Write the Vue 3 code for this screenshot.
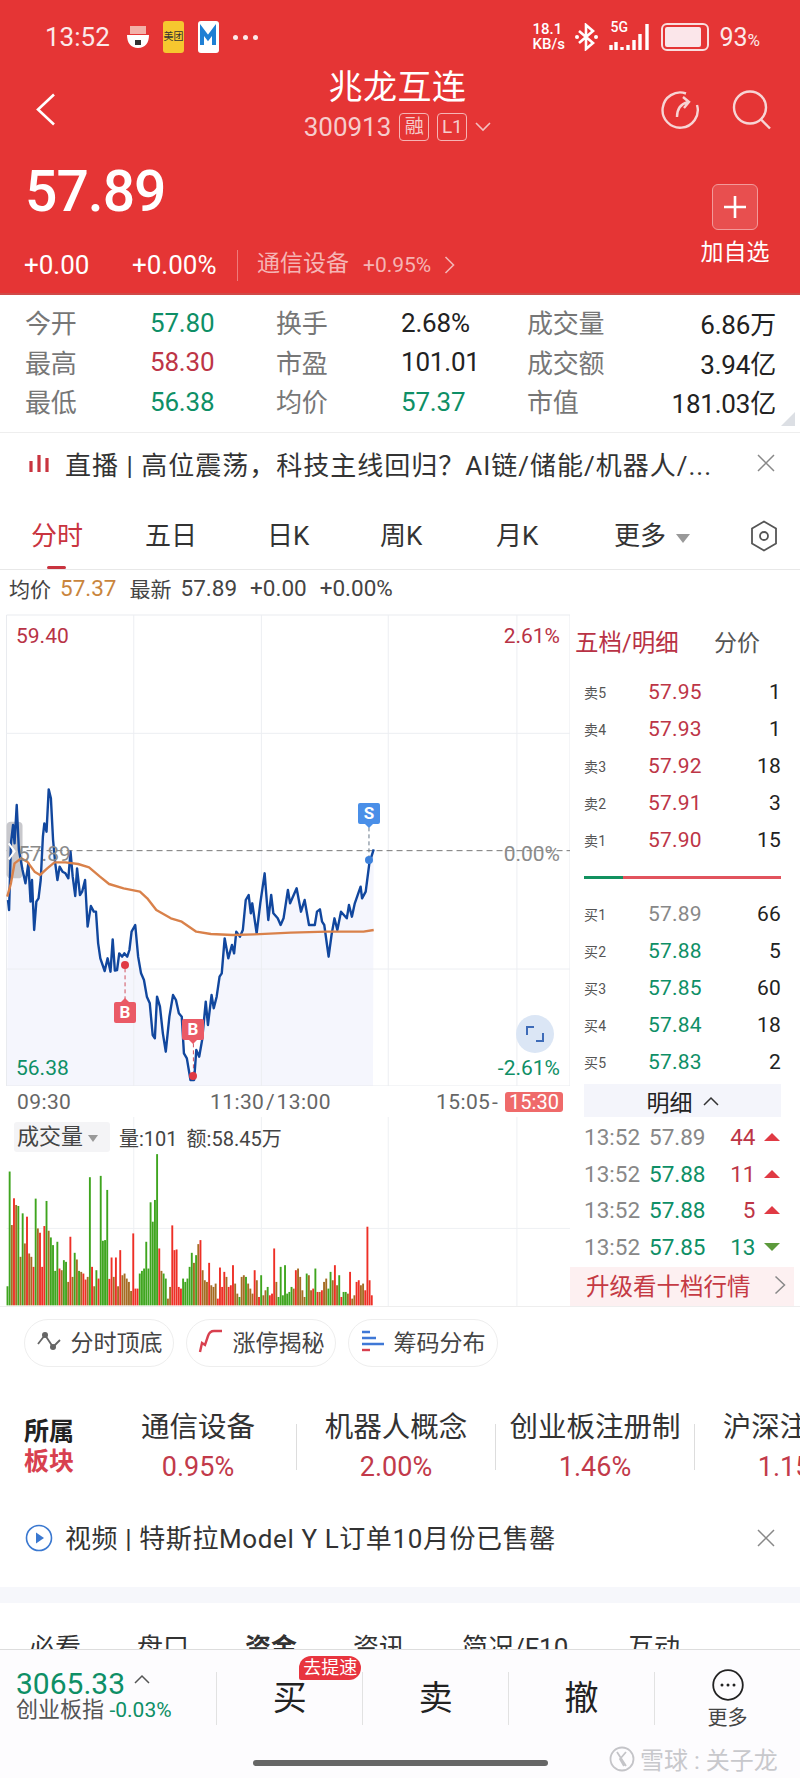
<template>
  <div class="page">
    <header class="top">
      <div class="status">
        <span class="clock">13:52</span>
        <svg class="app" width="22" height="24" viewBox="0 0 22 24">
          <rect x="3" y="1" width="16" height="8" fill="#f3b0a8" />
          <path d="M0 10h22c0 8-4 13-11 13S0 18 0 10z" fill="#fff" />
          <rect x="8" y="15" width="6" height="5" fill="#333" />
        </svg>
        <span class="meituan">美团</span>
        <svg class="app" width="21" height="32" viewBox="0 0 21 32">
          <rect width="21" height="32" rx="3" fill="#fff" />
          <path d="M4 24V9l6 8 6-8v15" fill="none" stroke="#1f7fd4" stroke-width="4" />
        </svg>
        <span class="dots">
          <i></i><i></i><i></i>
        </span>
        <span class="grow"></span>
        <span class="speed">18.1<br />KB/s</span>
        <svg class="bt" width="25" height="28" viewBox="0 0 25 28">
          <path d="M5 8l14 12-7 6V2l7 6L5 20" fill="none" stroke="#fff" stroke-width="2.6" />
          <circle cx="3" cy="14" r="2" fill="#fff" />
          <circle cx="22" cy="14" r="2" fill="#fff" />
        </svg>
        <span class="net">
          <span class="five">5G</span>
          <svg width="42" height="28" viewBox="0 0 42 28">
            <path d="M2 22v5M7 19v8M13 24v3M19 22v5M25 17v10M31 11v16M38 1v26" stroke="#fff" stroke-width="3.4" />
          </svg>
        </span>
        <span class="battery"><span class="level"></span></span>
        <span class="batt-num">93<small>%</small></span>
      </div>

      <div class="nav">
        <svg class="back" width="20" height="33" viewBox="0 0 20 33">
          <path d="M18 1.5L2 16.5l16 15" fill="none" stroke="#fff" stroke-width="2.6" />
        </svg>
        <div class="nav-mid">
          <div class="name">兆龙互连</div>
          <div class="sub">
            <span class="code">300913</span>
            <span class="tag">融</span>
            <span class="tag">L1</span>
            <svg width="16" height="10" viewBox="0 0 16 10">
              <path d="M1 1l7 7 7-7" fill="none" stroke="#f3c0c0" stroke-width="1.6" />
            </svg>
          </div>
        </div>
        <div class="nav-icons">
          <svg width="40" height="40" viewBox="0 0 40 40">
            <path d="M26 3.5A17.6 17.6 0 1 0 37 15" fill="none" stroke="#f7d5d5" stroke-width="2.4" />
            <path d="M17 27c0-8 3-13 11-15M23 7l6 5-5 6" fill="none" stroke="#f7d5d5" stroke-width="2.4" />
          </svg>
          <svg width="40" height="40" viewBox="0 0 40 40">
            <circle cx="18" cy="17.500" r="16" fill="none" stroke="#f7d5d5" stroke-width="2.4" />
            <path d="M29 29.500l9 9" stroke="#f7d5d5" stroke-width="2.4" />
          </svg>
        </div>
      </div>

      <div class="quote">
        <div>
          <div class="price">57.89</div>
          <div class="change">
            <span class="chg-a">+0.00</span>
            <span class="chg-b">+0.00%</span>
            <span class="chg-sector">通信设备</span>
            <span class="chg-pct">+0.95%</span>
            <svg width="11" height="18" viewBox="0 0 11 18">
              <path d="M1.500 1l8 8-8 8" fill="none" stroke="#f3b5b5" stroke-width="1.600" />
            </svg>
          </div>
        </div>
        <div class="add">
          <div class="plus">
            <svg width="24" height="24" viewBox="0 0 24 24">
              <path d="M12 1v22M1 12h22" stroke="#fff" stroke-width="2.600" />
            </svg>
          </div>
          <div class="add-text">加自选</div>
        </div>
      </div>
    </header>

    <section class="stats">
      <template v-for="row in stats" :key="row[0]">
        <span class="st-label">{{ row[0] }}</span>
        <span :class="row[2]">{{ row[1] }}</span>
        <span class="st-label">{{ row[3] }}</span>
        <span :class="row[5]">{{ row[4] }}</span>
        <span class="st-label">{{ row[6] }}</span>
        <span class="st-last">{{ row[7] }}</span>
      </template>
      <span class="corner"></span>
    </section>

    <div class="ticker">
      <svg width="20" height="18" viewBox="0 0 20 18">
        <path d="M2 7v11M10 1v17M18 4v14" stroke="#c9343f" stroke-width="3.200" />
      </svg>
      <span class="ticker-text live">直播 | 高位震荡，科技主线回归？AI链/储能/机器人/...</span>
      <svg class="close" width="18" height="18" viewBox="0 0 18 18">
        <path d="M1 1l16 16M17 1L1 17" stroke="#888" stroke-width="1.500" />
      </svg>
    </div>

    <nav class="tabs">
      <span class="tab active">分时</span>
      <span class="tab">五日</span>
      <span class="tab">日K</span>
      <span class="tab">周K</span>
      <span class="tab">月K</span>
      <span class="tab">更多<i class="caret"></i></span>
      <svg width="28" height="32" viewBox="0 0 28 32">
        <path d="M14 1.500l12 7v15l-12 7-12-7v-15z" fill="none" stroke="#555" stroke-width="1.800" />
        <circle cx="14" cy="16" r="4" fill="none" stroke="#555" stroke-width="1.800" />
      </svg>
    </nav>

    <div class="info">
      <span class="cjk">均价</span><span class="orange">57.37</span>
      <span class="gap cjk">最新</span><span>57.89</span>
      <span class="gap">+0.00</span><span class="gap">+0.00%</span>
    </div>

    <div class="market">
      <div class="left">
        <div class="chart">
          <svg class="lines" width="570" height="476" viewBox="0 0 1568 1428" preserveAspectRatio="none">
            <path :d="areaPath" fill="#f5f6fd" />
            <rect x="18" y="15" width="1550" height="1413" fill="none" stroke="#e9ebef" stroke-width="1" vector-effect="non-scaling-stroke" />
            <path d="M18 370H1568M18 1077H1568M368 15V1428M719 15V1428M1068 15V1428M1422 15V1428" stroke="#eceef2" fill="none" vector-effect="non-scaling-stroke" />
            <path d="M18 722H1568" stroke="#777" stroke-dasharray="6 4" fill="none" vector-effect="non-scaling-stroke" />
            <rect x="18" y="635" width="44" height="170" rx="12" fill="#c8c8cc" />
            <path d="M344 1075V1170M532 1300V1395" stroke="#d0505e" stroke-dasharray="4 3" fill="none" vector-effect="non-scaling-stroke" />
            <path d="M1015 652V745" stroke="#667788" stroke-dasharray="4 3" fill="none" vector-effect="non-scaling-stroke" />
            <path :d="bluePath" fill="none" stroke="#11479e" stroke-width="2.400" stroke-linejoin="round" vector-effect="non-scaling-stroke" />
            <path :d="orangePath" fill="none" stroke="#d9814a" stroke-width="2.400" stroke-linejoin="round" vector-effect="non-scaling-stroke" />
            <path d="M24 700l16 24-16 24" fill="none" stroke="#fff" stroke-width="2" vector-effect="non-scaling-stroke" />
          </svg>
          <span class="dot red" style="left: 121px; top: 351px"></span>
          <span class="dot red" style="left: 189px; top: 462px"></span>
          <span class="dot blue" style="left: 365px; top: 246px"></span>
          <span class="mark mark-b up" style="left: 114px; top: 392px">B</span>
          <span class="mark mark-b down" style="left: 182px; top: 409px">B</span>
          <span class="mark mark-s down" style="left: 358px; top: 193px">S</span>
          <span class="ax ax-tl">59.40</span>
          <span class="ax ax-tr">2.61%</span>
          <span class="ax ax-ml">57.89</span>
          <span class="ax ax-mr">0.00%</span>
          <span class="ax ax-bl">56.38</span>
          <span class="ax ax-br">-2.61%</span>
          <span class="expand">
            <svg width="20" height="20" viewBox="0 0 20 20">
              <path d="M9 3H2v8M11 17h7V9" fill="none" stroke="#3d6bb8" stroke-width="2" />
            </svg>
          </span>
        </div>
        <div class="times">
          <span>09:30</span>
          <span>11:30 / 13:00</span>
          <span>15:05 -</span>
          <span class="t-tag">15:30</span>
        </div>
        <div class="volume">
          <svg width="570" height="189" viewBox="0 52 1568 565" preserveAspectRatio="none">
            <path d="M18 385H1568M368 52V617M719 52V617M1068 52V617M1422 52V617" stroke="#eef0f3" fill="none" vector-effect="non-scaling-stroke" />
            <rect
              v-for="(bar, i) in volumeBars"
              :key="i"
              :x="18 + i * barStep"
              :y="bar.top"
              width="5.200"
              :height="615 - bar.top"
              :fill="bar.color"
            />
          </svg>
          <div class="vol-head">
            <span class="vol-chip">成交量<i class="caret small"></i></span>
            <span>量:101</span>
            <span>额:58.45万</span>
          </div>
        </div>
      </div>

      <aside class="panel">
        <div class="panel-head">
          <span class="ph-on">五档/明细</span>
          <span class="ph-off">分价</span>
        </div>
        <div v-for="r in sells" :key="r[0]" class="level-row">
          <span class="lv">{{ r[0] }}</span>
          <span class="up-c">{{ r[1] }}</span>
          <span class="qty">{{ r[2] }}</span>
        </div>
        <div class="depth"><span class="depth-buy"></span><span class="depth-sell"></span></div>
        <div v-for="r in buys" :key="r[0]" class="level-row">
          <span class="lv">{{ r[0] }}</span>
          <span :class="r[3]">{{ r[1] }}</span>
          <span class="qty">{{ r[2] }}</span>
        </div>
        <div class="detail-btn">
          明细
          <svg width="16" height="10" viewBox="0 0 16 10">
            <path d="M1 9l7-7 7 7" fill="none" stroke="#333" stroke-width="1.500" />
          </svg>
        </div>
        <div v-for="(t, i) in trades" :key="i" class="trade-row">
          <span class="tr-time">13:52</span>
          <span :class="t[1]">{{ t[0] }}</span>
          <span class="tr-qty" :class="t[3]">{{ t[2] }}</span>
          <i :class="t[3] === 'up-c' ? 'tri-up' : 'tri-down'"></i>
        </div>
        <div class="upgrade">
          <span>升级看十档行情</span>
          <svg width="12" height="20" viewBox="0 0 12 20">
            <path d="M1.500 1.500l9 8.500-9 8.500" fill="none" stroke="#888" stroke-width="1.500" />
          </svg>
        </div>
      </aside>
    </div>

    <div class="chips">
      <span class="chip">
        <svg width="26" height="20" viewBox="0 0 26 20">
          <path d="M2 13l7-9 8 12 7-7" fill="none" stroke="#666" stroke-width="1.800" />
          <circle cx="9" cy="4" r="3" fill="#666" />
          <circle cx="17" cy="16" r="3" fill="#666" />
        </svg>
        分时顶底
      </span>
      <span class="chip">
        <svg width="26" height="24" viewBox="0 0 26 24">
          <path d="M2 23l2-9 3 2 3-9c1-3 3-5 6-5h8" fill="none" stroke="#d8404f" stroke-width="2.400" />
        </svg>
        涨停揭秘
      </span>
      <span class="chip">
        <svg width="24" height="22" viewBox="0 0 24 22">
          <path d="M1 2h8M1 8h14M1 14h22" stroke="#3f78d6" stroke-width="2.400" />
          <path d="M1 20h8" stroke="#d8404f" stroke-width="2.400" />
        </svg>
        筹码分布
      </span>
    </div>

    <div class="sectors">
      <div class="sec-title"><span>所属</span><span class="sec-red">板块</span></div>
      <template v-for="s in sectors" :key="s.name">
        <div class="sec-item" :style="{ flexBasis: s.w + 'px' }">
          <span class="sec-name">{{ s.name }}</span>
          <span class="sec-pct">{{ s.pct }}</span>
        </div>
        <i class="sec-sep"></i>
      </template>
    </div>

    <div class="video">
      <svg width="28" height="28" viewBox="0 0 28 28">
        <circle cx="14" cy="14" r="12.500" fill="none" stroke="#3a78d0" stroke-width="1.600" />
        <path d="M11 8.500l8 5.500-8 5.500z" fill="#3a78d0" />
      </svg>
      <span class="ticker-text vid">视频 | 特斯拉Model Y L订单10月份已售罄</span>
      <svg class="close" width="18" height="18" viewBox="0 0 18 18">
        <path d="M1 1l16 16M17 1L1 17" stroke="#888" stroke-width="1.500" />
      </svg>
    </div>

    <div class="band"></div>

    <div class="lower-tabs">
      <span style="width: 108px">必看</span>
      <span style="width: 108px">盘口</span>
      <span class="bold" style="width: 108px">资金</span>
      <span style="width: 109px">资讯</span>
      <span style="width: 166px">简况/F10</span>
      <span>互动</span>
    </div>

    <footer class="bottom">
      <div class="bar-row">
        <div class="index">
          <div class="idx-val">3065.33
            <svg width="16" height="10" viewBox="0 0 16 10">
              <path d="M1 9l7-7 7 7" fill="none" stroke="#555" stroke-width="1.500" />
            </svg>
          </div>
          <div class="idx-name">创业板指 <span>-0.03%</span></div>
        </div>
        <div class="act"><b>买</b><span class="speedup">去提速</span></div>
        <div class="act"><b>卖</b></div>
        <div class="act"><b>撤</b></div>
        <div class="act more">
          <svg width="32" height="32" viewBox="0 0 32 32">
            <circle cx="16" cy="16" r="14.800" fill="none" stroke="#222" stroke-width="1.800" />
            <circle cx="10" cy="16" r="1.500" fill="#222" />
            <circle cx="16" cy="16" r="1.500" fill="#222" />
            <circle cx="22" cy="16" r="1.500" fill="#222" />
          </svg>
          <span>更多</span>
        </div>
      </div>
      <div class="home"></div>
      <div class="watermark">
        <svg width="26" height="26" viewBox="0 0 26 26">
          <circle cx="13" cy="13" r="11.500" fill="none" stroke="#c4c4c8" stroke-width="1.800" />
          <path d="M8 6l9 14M17 6l-6 7 4 7" fill="none" stroke="#c4c4c8" stroke-width="1.800" />
        </svg>
        <span>雪球 : 关子龙</span>
      </div>
    </footer>
  </div>
</template>

<script setup>
const stats = [
  ['今开', '57.80', 'st-val down-c', '换手', '2.68%', 'st-val', '成交量', '6.86万'],
  ['最高', '58.30', 'st-val up-c', '市盈', '101.01', 'st-val', '成交额', '3.94亿'],
  ['最低', '56.38', 'st-val down-c', '均价', '57.37', 'st-val down-c', '市值', '181.03亿'],
]

const sells = [
  ['卖5', '57.95', 1],
  ['卖4', '57.93', 1],
  ['卖3', '57.92', 18],
  ['卖2', '57.91', 3],
  ['卖1', '57.90', 15],
]

const buys = [
  ['买1', '57.89', 66, 'flat-c'],
  ['买2', '57.88', 5, 'down-c'],
  ['买3', '57.85', 60, 'down-c'],
  ['买4', '57.84', 18, 'down-c'],
  ['买5', '57.83', 2, 'down-c'],
]

const trades = [
  ['57.89', 'flat-c', 44, 'up-c'],
  ['57.88', 'down-c', 11, 'up-c'],
  ['57.88', 'down-c', 5, 'up-c'],
  ['57.85', 'down-c', 13, 'down-c'],
]

const sectors = [
  { name: '通信设备', pct: '0.95%', w: 196 },
  { name: '机器人概念', pct: '2.00%', w: 198 },
  { name: '创业板注册制', pct: '1.46%', w: 198 },
  { name: '沪深注册制', pct: '1.15%', w: 198 },
]

// traced by hand from the intraday chart, x/y in the svg viewBox
const blue = '22,870 25,900 30,700 36,645 40,700 46,585 52,720 62,780 70,820 78,760 84,875 88,810 94,960 100,875 106,865 112,810 118,680 122,640 128,665 134,538 140,565 146,690 152,760 158,810 164,770 172,785 180,790 188,805 194,725 200,800 207,858 212,775 220,855 226,845 234,810 241,950 250,888 258,905 264,905 270,1000 276,1045 288,1083 296,1045 304,1085 310,988 316,1082 322,1080 328,1030 336,1040 342,1030 350,1040 356,1020 362,965 372,945 380,1040 388,1090 396,1110 404,1160 412,1180 420,1275 426,1285 432,1160 440,1190 448,1270 456,1325 466,1220 476,1155 484,1170 492,1210 500,1220 506,1330 514,1345 524,1410 534,1410 540,1320 548,1340 556,1290 566,1175 572,1245 582,1155 588,1195 596,1160 604,1100 610,1090 618,985 628,1045 638,1005 644,1030 650,965 660,980 668,960 676,870 684,855 690,910 694,880 706,970 716,880 728,790 738,930 746,855 752,910 764,925 772,945 780,925 792,840 798,880 816,835 828,905 838,870 850,945 866,945 872,905 880,898 886,935 892,945 904,1040 912,975 920,925 928,960 938,905 954,925 960,885 968,920 976,880 992,830 996,865 1006,845 1016,760 1028,718'
const orange = '20,860 30,820 40,760 58,745 75,755 95,785 110,795 130,775 150,757 180,757 215,762 245,772 275,800 300,822 340,835 385,845 405,865 430,900 470,925 500,935 540,965 580,972 640,975 700,973 800,968 900,965 1000,965 1028,960'

const bluePath = 'M' + blue.replaceAll(' ', 'L')
const orangePath = 'M' + orange.replaceAll(' ', 'L')
const areaPath = 'M18,1428L' + blue.replaceAll(' ', 'L') + 'L1026,1428Z'

const barColors = { g: '#3fa51f', r: '#ee2f26', b: '#a56c24' }
const volumeBars = 'g558 g215 b375 r295 b315 g318 b470 g340 b430 r350 b460 b470 r500 g296 b385 r398 r500 r378 g303 b392 g412 g435 g512 g425 r505 b510 g480 g485 b545 r410 b530 g458 b478 g512 b515 r520 r538 b530 g232 r500 b558 g510 r535 g228 g422 g420 g270 r536 r472 b530 r472 b558 r450 b525 b520 b535 b545 b572 r400 r565 r565 g520 g512 g505 g425 g505 g307 g365 g300 g163 r445 b512 g520 g535 b595 b560 r376 r450 r448 r560 r565 g535 g545 g535 g500 g458 b488 g465 b432 r420 b510 b540 b545 r488 b555 b560 b550 r595 r502 r560 r515 b530 r560 r555 r495 b550 b580 g590 b530 b525 g530 b550 b565 b580 r510 b540 r590 g525 b585 b570 g560 r585 r580 r445 b545 g590 g500 g585 g495 g580 g575 g560 b565 r510 b505 b530 b570 b590 g520 b525 b570 r565 g505 r575 b575 r570 b545 b535 g565 g515 b540 r495 b555 g525 r590 g575 g575 b580 r515 b595 b585 r545 r540 b555 b550 r570 r380 r540 r585'
  .split(' ')
  .map(item => ({ color: barColors[item[0]], top: Number(item.slice(1)) }))
const barStep = 1008 / volumeBars.length
</script>

<style scoped>
.page {
  width: 800px;
  height: 1778px;
  overflow: hidden;
  background: #fff;
  font-family: Roboto, 'Noto Sans CJK SC', sans-serif;
  color: #222;
  position: relative;
}

.top {
  height: 295px;
  background: #e53535;
  color: #fff;
  box-sizing: border-box;
  border-bottom: 2px solid #d04a48;
}

.status {
  height: 74px;
  display: flex;
  align-items: center;
  padding: 0 40px 0 45px;
}
.clock {
  font-size: 26px;
  width: 82px;
  color: #fbe9e9;
}
.app {
  flex: none;
}
.meituan {
  width: 21px;
  height: 32px;
  margin: 0 14px;
  border-radius: 3px;
  background: #f6c72f;
  color: #333;
  font-size: 10px;
  line-height: 32px;
  text-align: center;
  overflow: hidden;
  white-space: nowrap;
}
.dots {
  display: flex;
  gap: 5px;
  margin-left: 14px;
}
.dots i {
  width: 5px;
  height: 5px;
  border-radius: 50%;
  background: #fbe9e9;
}
.grow {
  flex: 1;
}
.speed {
  font-size: 15px;
  line-height: 15px;
  font-weight: 500;
  width: 42px;
}
.bt {
  margin-right: 10px;
}
.net {
  position: relative;
  width: 44px;
}
.net svg {
  display: block;
}
.five {
  position: absolute;
  left: 1px;
  top: -4px;
  font-size: 14px;
  font-weight: 500;
}
.battery {
  width: 40px;
  height: 20px;
  margin-left: 8px;
  border: 2px solid #f9dede;
  border-radius: 6px;
  padding: 2px;
  display: block;
}
.level {
  display: block;
  width: 90%;
  height: 100%;
  border-radius: 2px;
  background: #fbe6ea;
}
.batt-num {
  margin-left: 10px;
  font-size: 25px;
  color: #fbe9e9;
}
.batt-num small {
  font-size: 17px;
}

.nav {
  height: 72px;
  display: grid;
  grid-template-columns: 200px 1fr 200px;
  padding-left: 36px;
  padding-right: 28px;
}
.back {
  margin-top: 19px;
}
.nav-mid {
  display: flex;
  flex-direction: column;
  align-items: center;
  margin-left: -13px;
}
.name {
  font-size: 34px;
  line-height: 26px;
  letter-spacing: 0.5px;
}
.sub {
  display: flex;
  align-items: center;
  gap: 8px;
  margin-top: 13px;
  height: 28px;
  color: #f6cccc;
}
.code {
  font-size: 26px;
}
.tag {
  width: 28px;
  height: 26px;
  border: 1px solid #f6b4b4;
  border-radius: 4px;
  font-size: 19px;
  line-height: 25px;
  text-align: center;
}
.nav-icons {
  display: flex;
  justify-content: flex-end;
  gap: 32px;
  margin-top: 16px;
}

.quote {
  display: flex;
  justify-content: space-between;
  padding: 0 30px 0 24px;
}
.price {
  margin-top: 16px;
  margin-left: 1px;
  font-size: 57px;
  line-height: 60px;
  letter-spacing: -1px;
  font-weight: 500;
}
.change {
  margin-top: 28px;
  height: 30px;
  display: flex;
  align-items: center;
}
.chg-a {
  width: 108px;
  font-size: 26px;
}
.chg-b {
  width: 105px;
  font-size: 26px;
}
.chg-sector {
  border-left: 1px solid #ef7a7a;
  padding-left: 19px;
  font-size: 23px;
  line-height: 28px;
  padding-bottom: 3px;
  color: #f5b4b4;
  margin-right: 14px;
}
.chg-pct {
  font-size: 21px;
  color: #f5b4b4;
  margin-right: 13px;
}
.add {
  width: 70px;
  display: flex;
  flex-direction: column;
  align-items: center;
}
.plus {
  margin-top: 38px;
  width: 46px;
  height: 46px;
  box-sizing: border-box;
  border: 1px solid #f29a9a;
  border-radius: 6px;
  background: #e84f4f;
  display: flex;
  align-items: center;
  justify-content: center;
}
.add-text {
  margin-top: 8px;
  font-size: 23px;
  line-height: 30px;
}

.stats {
  position: relative;
  height: 138px;
  box-sizing: border-box;
  padding: 8px 24px 0 25px;
  border-bottom: 1px solid #eee;
  display: grid;
  grid-template-columns: 125px 126px 125px 126px 120px 1fr;
  grid-auto-rows: 39.500px;
  align-items: center;
  font-size: 26px;
  letter-spacing: -0.2px;
}
.st-label {
  color: #777;
  padding-bottom: 2px;
}
.st-last {
  text-align: right;
  color: #222;
}
.corner {
  position: absolute;
  right: 5px;
  bottom: 6px;
  width: 0;
  height: 0;
  border-left: 14px solid transparent;
  border-bottom: 14px solid #dcdfe4;
}
.down-c {
  color: #0e8f66;
}
.up-c {
  color: #bd3546;
}
.flat-c {
  color: #888;
}

.ticker {
  height: 60px;
  display: flex;
  align-items: center;
  padding: 0 25px 0 29px;
  gap: 16px;
}
.ticker-text {
  flex: 1;
  font-size: 26px;
  color: #333;
  white-space: nowrap;
}
.ticker-text.live {
  letter-spacing: 1px;
}
.ticker-text.vid {
  letter-spacing: 0.6px;
  padding-bottom: 4px;
}
.close {
  flex: none;
}

.tabs {
  height: 77px;
  box-sizing: border-box;
  border-bottom: 1px solid #e8e8e8;
  padding: 14px 0 0 31px;
  display: grid;
  grid-template-columns: 114px 122px 113px 116px 118px 136px 30px;
  align-items: start;
  font-size: 26px;
  line-height: 58px;
  color: #333;
}
.tabs svg {
  margin-top: 13px;
}
.tab {
  position: relative;
  height: 62px;
}
.tab.active {
  color: #c9343f;
}
.tab.active::after {
  content: '';
  position: absolute;
  left: 16px;
  bottom: 0;
  width: 19px;
  height: 3px;
  border-radius: 2px;
  background: #c9343f;
}
.caret {
  display: inline-block;
  width: 0;
  height: 0;
  margin-left: 10px;
  vertical-align: middle;
  border-left: 7px solid transparent;
  border-right: 7px solid transparent;
  border-top: 9px solid #999;
}
.caret.small {
  margin-left: 5px;
  border-left-width: 5px;
  border-right-width: 5px;
  border-top-width: 7px;
}

.info {
  height: 40px;
  box-sizing: border-box;
  padding: 0 0 4px 9px;
  display: flex;
  align-items: center;
  gap: 9px;
  font-size: 22.500px;
  color: #444;
}
.info .cjk {
  font-size: 21px;
}
.info .gap {
  margin-left: 4px;
}
.orange {
  color: #c9853d;
}

.market {
  display: flex;
  height: 696px;
  border-bottom: 1px solid #eee;
}
.left {
  width: 570px;
  flex: none;
}
.chart {
  position: relative;
  height: 476px;
}
.lines {
  display: block;
}
.dot {
  position: absolute;
  width: 8px;
  height: 8px;
  border-radius: 50%;
}
.dot.red {
  background: #e03a44;
}
.dot.blue {
  background: #3d82dc;
}
.mark {
  position: absolute;
  width: 22px;
  height: 21px;
  border-radius: 2px;
  color: #fff;
  font-size: 17px;
  font-weight: 700;
  line-height: 21px;
  text-align: center;
}
.mark-b {
  background: #ea5a66;
}
.mark-s {
  background: #4a8fe8;
}
.mark.up::before,
.mark.down::after {
  content: '';
  position: absolute;
  left: 7px;
  border-left: 4px solid transparent;
  border-right: 4px solid transparent;
}
.mark.up::before {
  top: -4px;
  border-bottom: 4px solid #ea5a66;
}
.mark-b.down::after {
  bottom: -4px;
  border-top: 4px solid #ea5a66;
}
.mark-s.down::after {
  bottom: -4px;
  border-top: 4px solid #4a8fe8;
}
.ax {
  position: absolute;
  font-size: 21px;
  line-height: 26px;
}
.ax-tl {
  left: 16px;
  top: 13px;
  color: #b83245;
}
.ax-tr {
  right: 10px;
  top: 13px;
  color: #b83245;
}
.ax-ml {
  left: 18px;
  top: 231px;
  color: #8a8a8a;
}
.ax-mr {
  right: 10px;
  top: 231px;
  color: #8a8a8a;
}
.ax-bl {
  left: 16px;
  top: 445px;
  color: #0e8f66;
}
.ax-br {
  right: 10px;
  top: 445px;
  color: #0e8f66;
}
.expand {
  position: absolute;
  left: 516px;
  top: 405px;
  width: 38px;
  height: 38px;
  border-radius: 50%;
  background: #dbe6f5;
  display: flex;
  align-items: center;
  justify-content: center;
}

.times {
  height: 31px;
  display: grid;
  grid-template-columns: 193px 226px 69px 58px;
  align-items: center;
  padding-left: 17px;
  font-size: 21px;
  letter-spacing: 0.4px;
  word-spacing: -4px;
  white-space: nowrap;
  color: #666;
}
.t-tag {
  height: 20px;
  line-height: 20px;
  border-radius: 3px;
  background: #ef6a6a;
  color: #fff;
  text-align: center;
  font-size: 20px;
  letter-spacing: 0;
}

.volume {
  position: relative;
  height: 189px;
}
.volume svg {
  display: block;
}
.vol-head {
  position: absolute;
  left: 14px;
  top: 5px;
  display: flex;
  align-items: center;
  gap: 9px;
  font-size: 20px;
  color: #444;
}
.vol-chip {
  width: 96px;
  height: 30px;
  box-sizing: border-box;
  padding-left: 3px;
  background: #f4f4f6;
  border-radius: 3px;
  font-size: 22px;
  line-height: 30px;
  white-space: nowrap;
}

.panel {
  flex: 1;
  padding: 0 19px 0 14px;
}
.panel-head {
  height: 63.500px;
  display: flex;
  align-items: center;
  justify-content: space-between;
  padding: 0 21px 2px 0;
  margin-left: -9px;
  font-size: 23.500px;
  box-sizing: border-box;
}
.ph-on {
  color: #b83245;
}
.ph-off {
  color: #555;
  font-size: 23px;
}
.level-row {
  height: 37px;
  display: grid;
  grid-template-columns: 64px 1fr auto;
  align-items: center;
  font-size: 21px;
  letter-spacing: 0.2px;
}
.lv {
  font-size: 14px;
  color: #555;
}
.qty {
  color: #222;
}
.depth {
  height: 37px;
  display: flex;
  align-items: center;
}
.depth-buy {
  width: 39px;
  height: 3px;
  background: #12915f;
}
.depth-sell {
  flex: 1;
  height: 3px;
  background: #e2535d;
}
.detail-btn {
  margin-top: 3.500px;
  margin-bottom: 2px;
  height: 33px;
  background: #f4f5fb;
  display: flex;
  align-items: center;
  justify-content: center;
  gap: 10px;
  font-size: 23px;
  color: #222;
}
.trade-row {
  height: 36.500px;
  display: flex;
  align-items: center;
  font-size: 22.500px;
}
.tr-time {
  width: 65px;
  color: #888;
}
.tr-qty {
  width: 50px;
  text-align: right;
}
.tri-up,
.tri-down {
  margin-left: 8px;
  width: 0;
  height: 0;
  border-left: 8px solid transparent;
  border-right: 8px solid transparent;
}
.tri-up {
  border-bottom: 8px solid #e03a44;
}
.tri-down {
  border-top: 8px solid #5c9a3c;
}
.upgrade {
  margin: 2px -13px 0 -14px;
  height: 39px;
  box-sizing: border-box;
  padding: 0 8px 4px 16px;
  display: flex;
  align-items: center;
  justify-content: space-between;
  background: #fdf0f1;
  color: #c53a44;
  font-size: 23.500px;
}

.chips {
  display: flex;
  gap: 12px;
  padding: 12px 0 0 24px;
}
.chip {
  width: 150px;
  height: 48px;
  box-sizing: border-box;
  padding-bottom: 5px;
  border: 1px solid #eeeeee;
  border-radius: 24px;
  display: flex;
  align-items: center;
  justify-content: center;
  gap: 9px;
  font-size: 23px;
  color: #444;
}

.sectors {
  margin-top: 41px;
  height: 78px;
  display: flex;
  align-items: center;
  overflow: hidden;
}
.sec-title {
  width: 100px;
  flex: none;
  box-sizing: border-box;
  padding-left: 24px;
  display: flex;
  flex-direction: column;
  font-size: 25px;
  line-height: 30px;
  font-weight: 700;
}
.sec-red {
  color: #d8404f;
}
.sec-item {
  flex: none;
  display: flex;
  flex-direction: column;
  align-items: center;
}
.sec-name {
  font-size: 28.500px;
  line-height: 40px;
  color: #333;
  white-space: nowrap;
}
.sec-pct {
  font-size: 27px;
  line-height: 38px;
  color: #c23a4a;
}
.sec-sep {
  flex: none;
  width: 1px;
  height: 46px;
  background: #ddd;
}

.video {
  margin-top: 27px;
  height: 50px;
  display: flex;
  align-items: center;
  gap: 12px;
  padding: 0 25px 0 25px;
}

.band {
  margin-top: 24px;
  height: 16px;
  background: #f6f7fb;
}

.lower-tabs {
  height: 46px;
  overflow: hidden;
  box-sizing: border-box;
  padding: 27px 0 0 29px;
  display: flex;
  font-size: 26px;
  line-height: 36px;
  color: #333;
}
.bold {
  font-weight: 700;
}

.bottom {
  height: 129px;
  box-sizing: border-box;
  border-top: 1px solid #ddd;
  background: #fdfcfe;
  padding-top: 22px;
  position: relative;
}
.bar-row {
  display: flex;
  height: 53px;
}
.index {
  width: 217px;
  box-sizing: border-box;
  padding-left: 16px;
}
.idx-val {
  font-size: 30px;
  line-height: 24px;
  color: #0e8f66;
  display: flex;
  align-items: flex-start;
  gap: 9px;
}
.idx-val svg {
  margin-top: 2px;
}
.idx-name {
  margin-top: 2px;
  font-size: 22px;
  line-height: 24px;
  color: #555;
}
.idx-name span {
  font-size: 21px;
  color: #0e8f66;
}
.act {
  position: relative;
  width: 146.500px;
  border-left: 1px solid #e2e2e2;
  box-sizing: border-box;
  display: flex;
  align-items: center;
  justify-content: center;
  font-size: 34px;
  color: #222;
}
.act b {
  font-weight: 400;
  padding-bottom: 6px;
}
.speedup {
  position: absolute;
  left: 82px;
  top: -16px;
  width: 62px;
  height: 24px;
  border-radius: 12px 12px 12px 2px;
  background: #e8343f;
  color: #fff;
  font-size: 18px;
  line-height: 24px;
  text-align: center;
}
.more {
  flex-direction: column;
  justify-content: flex-start;
  font-size: 20px;
  line-height: 24px;
  color: #444;
  gap: 5px;
}
.more svg {
  flex: none;
  margin-top: -3px;
}
.home {
  margin: 35px auto 0;
  width: 295px;
  height: 6px;
  border-radius: 3px;
  background: #666;
}
.watermark {
  position: absolute;
  left: 609px;
  top: 91px;
  display: flex;
  align-items: center;
  gap: 5px;
  font-size: 24px;
  color: #c8c8cc;
  white-space: nowrap;
}
</style>
